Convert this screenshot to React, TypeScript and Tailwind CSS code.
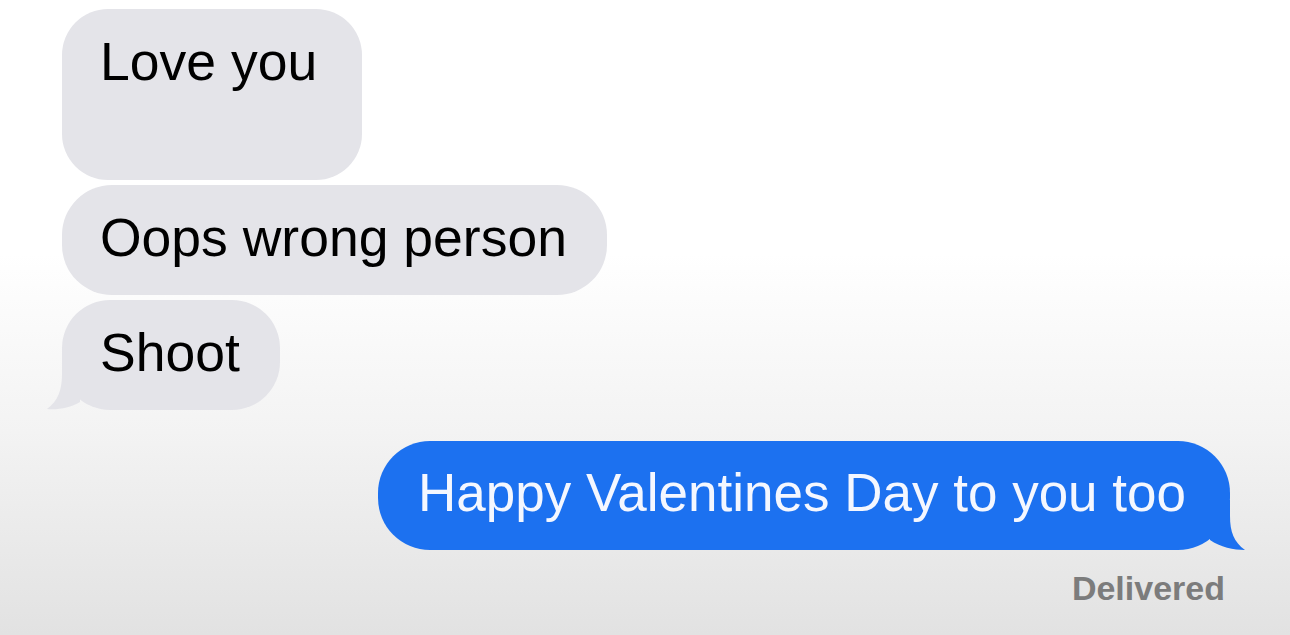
import type { ReactNode } from "react";

interface BubbleProps {
  children: ReactNode;
  className?: string;
  tail?: "left" | "right";
}

const LeftTail = () => (
  <svg
    className="absolute -left-[16px] bottom-0 w-[50px] h-[50px]"
    viewBox="0 0 50 50"
    fill="#e4e4e9"
  >
    <path d="M16 0 L16 14 C16 30 12 41 1 49 C12 50 24 48 34 42 L34 0 Z" />
  </svg>
);

const RightTail = () => (
  <svg
    className="absolute -right-[16px] bottom-0 w-[50px] h-[50px]"
    viewBox="0 0 50 50"
    fill="#1c71f0"
  >
    <path d="M34 0 L34 16 C34 32 38 42 49 50 C38 50 24 47 14 40 L14 0 Z" />
  </svg>
);

const GrayBubble = ({ children, className = "", tail }: BubbleProps) => (
  <div
    className={`relative self-start bg-[#e4e4e9] text-black pl-[38px] pr-[40px] pt-[23px] ${className}`}
  >
    {tail === "left" && <LeftTail />}
    <p className="relative text-[53.5px] leading-[60px] whitespace-nowrap">{children}</p>
  </div>
);

export default function App() {
  return (
    <div
      className="w-full h-[635px] overflow-hidden bg-linear-to-b from-white from-40% via-[#f3f3f3] via-68% to-[#e2e2e2]"
      style={{ fontFamily: '"Liberation Sans", Arial, sans-serif' }}
    >
      <div className="flex flex-col pl-[62px] pr-[60px] pt-[9px]">
        <GrayBubble className="w-[300px] h-[171px] rounded-[46px]">Love you</GrayBubble>
        <GrayBubble className="mt-[5px] h-[110px] rounded-[50px]">Oops wrong person</GrayBubble>
        <GrayBubble className="mt-[5px] h-[110px] rounded-[48px]" tail="left">
          Shoot
        </GrayBubble>

        <div className="relative self-end mt-[31px] h-[109px] rounded-[52px] bg-[#1c71f0] pl-[40px] pr-[44px] pt-[22px]">
          <RightTail />
          <p className="relative text-[53px] leading-[60px] text-[#f4f7ff] whitespace-nowrap">
            Happy Valentines Day to you too
          </p>
        </div>

        <p className="self-end mt-[18px] mr-[5px] text-[34px] leading-[40px] font-bold text-[#7c7c7c]">
          Delivered
        </p>
      </div>
    </div>
  );
}
